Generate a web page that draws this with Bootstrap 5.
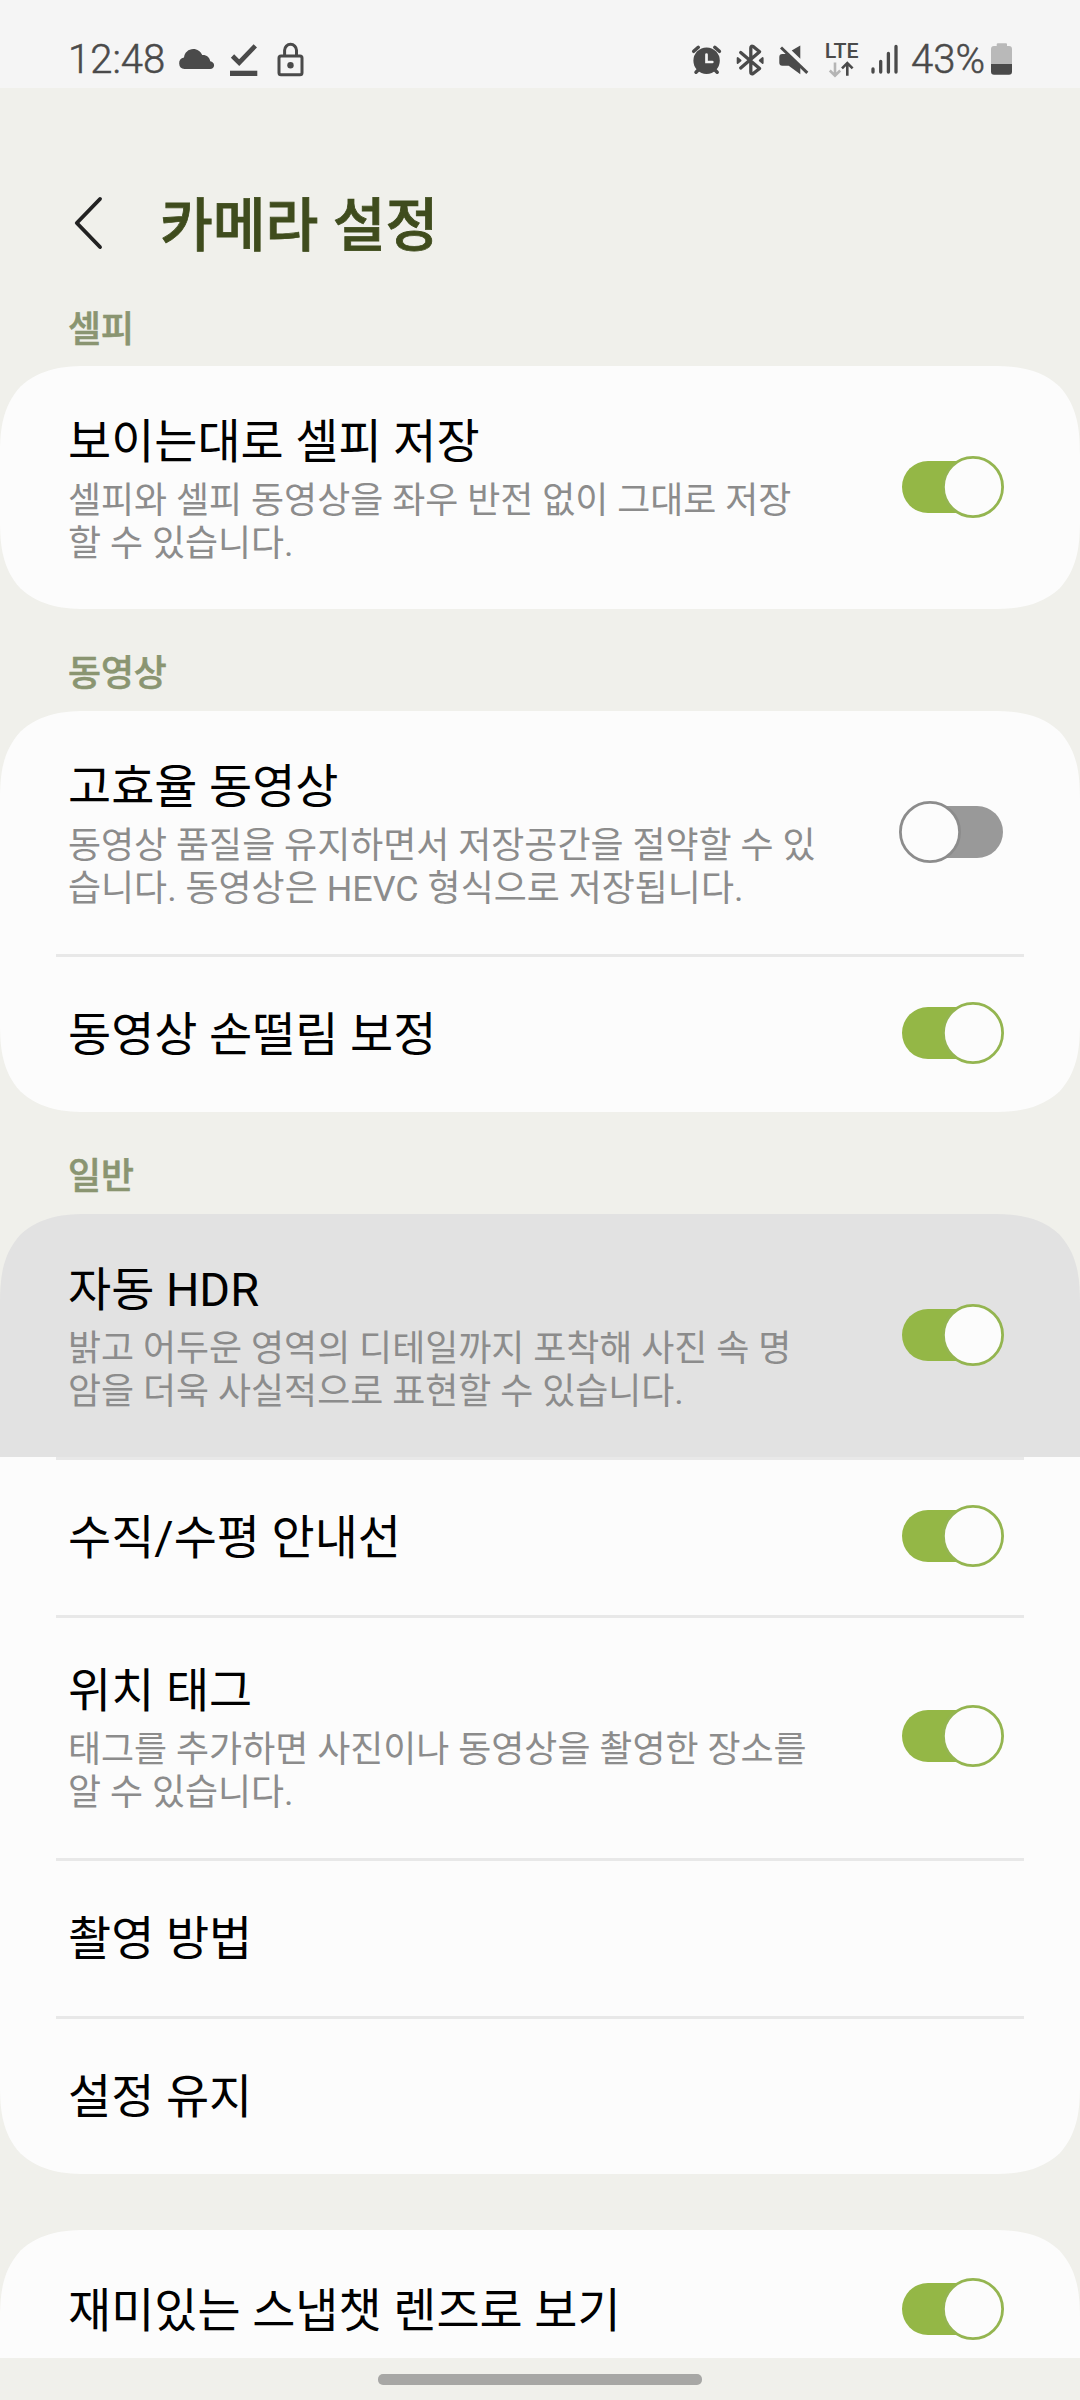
<!DOCTYPE html>
<html lang="ko">
<head>
<meta charset="utf-8">
<meta name="viewport" content="width=device-width, initial-scale=1">
<title>카메라 설정</title>
<link href="https://cdn.jsdelivr.net/npm/bootstrap@5.3.0/dist/css/bootstrap.min.css" rel="stylesheet">
<style>
  body { background: #f0f0eb; font-family: Roboto, "Noto Sans CJK KR", sans-serif; color: #000; }
  .screen { width: 1080px; height: 2400px; }
  .statusbar { height: 88px; background: #f5f5f5; color: #4a4a4a; font-size: 40px; line-height: 47px; font-weight: 300; -webkit-text-stroke: .5px #4a4a4a; padding: 0 67px 0 68px; flex: none; }
  .statusbar .clock { padding-top: 36px; width: 104px; }
  .statusbar .charge { padding-top: 36px; width: 74px; white-space: nowrap; }
  .statusbar svg { height: 88px; flex: none; }
  .appbar { height: 218px; padding: 51px 0 0 68px; flex: none; }
  .appbar h1 { font-size: 57.4px; line-height: 80px; font-weight: 500; -webkit-text-stroke: .8px #3f4c1d; color: #3f4c1d; margin: 9px 0 0 52px; }
  .section-label { font-size: 35.8px; line-height: 42px; font-weight: 500; -webkit-text-stroke: .6px #8a9571; color: #8a9571; padding-left: 68px; height: 102px; padding-top: 44px; flex: none; }
  .section-label.first { height: 60px; padding-top: 3px; }
  .panel { background: #fcfcfc; flex: none; }
  .item { height: 158px; padding: 0 76px 0 68px; }
  .item.tall { height: 243px; padding-bottom: 1px; }
  .item.tall .item-title { padding-top: 6px; }
  .item.pressed { background: #e2e2e2; }
  .item + .item::before { content: ""; position: absolute; top: 0; left: 56px; right: 56px; height: 3px; background: #e8e8e8; }
  .item-title { font-size: 46.9px; line-height: 56px; white-space: nowrap; padding-top: 3px; }
  .item-desc { font-size: 35.93px; line-height: 43px; color: #8c8c8c; white-space: nowrap; padding-top: 10px; }
  .toggle { width: 105px; height: 62px; flex: none; }
  .curve { position: absolute; width: 96px; height: 96px; fill: #f0f0eb; z-index: 2; }
  .curve.tl { left: 0; top: 0; }
  .curve.tr { right: 0; top: 0; transform: scaleX(-1); }
  .curve.bl { left: 0; bottom: 0; transform: scaleY(-1); }
  .curve.br { right: 0; bottom: 0; transform: scale(-1); }
  .gap-block { height: 56px; flex: none; }
  .last { height: 128px; }
  .navarea { height: 42px; padding-top: 16px; flex: none; }
  .home-pill { width: 324px; height: 11px; border-radius: 5px; background: #a7a7a5; }
</style>
</head>
<body>
<svg class="d-none">
  <symbol id="curve" viewBox="0 0 96 96"><path d="M0 0H90C64 0 41 2 20.500 20.500C2 41 0 64 0 90Z"/></symbol>
  <symbol id="on" viewBox="0 0 105 62"><rect x="3" y="5" width="100" height="52" rx="26" fill="#94b746"/><circle cx="74" cy="31" r="29.600" fill="#fcfcfc" stroke="#94b550" stroke-width="2.800"/></symbol>
  <symbol id="off" viewBox="0 0 105 62"><rect x="3" y="5" width="101" height="52" rx="26" fill="#999"/><circle cx="31" cy="31" r="29.600" fill="#fcfcfc" stroke="#8c8c8c" stroke-width="2.800"/></symbol>
</svg>
<div class="screen d-flex flex-column overflow-hidden">
  <header class="statusbar d-flex justify-content-between">
    <div class="d-flex">
      <span class="clock">12:48</span>
      <svg width="46" viewBox="172 0 46 88" fill="#4a4a4a"><path d="M184.500 69a5.800 5.800 0 0 1-.5-11.500C184.500 52.500 188.500 49 193.300 49c4 0 7.400 2.400 8.900 6 4.300-.3 7.600 2.500 8 6.200 2.400.4 3.900 2 3.900 4 0 2.200-1.700 3.800-4 3.800z"/></svg>
      <svg width="52" viewBox="218 0 52 88"><path d="M232.500 56l6.700 6.600L255.300 45.800" fill="none" stroke="#4a4a4a" stroke-width="4.700"/><path d="M230 70.700h27.300V76H230z" fill="#4a4a4a"/></svg>
      <svg width="36" viewBox="270 0 36 88" fill="none" stroke="#4a4a4a" stroke-width="3"><rect x="279" y="56" width="23" height="18.800" rx="2"/><path d="M284.600 56v-5.700a5.900 5.900 0 0 1 11.900 0V56"/><circle cx="290.500" cy="65.200" r="3.200" fill="#4a4a4a" stroke="none"/></svg>
    </div>
    <div class="d-flex">
      <svg width="40" viewBox="690 0 40 88" fill="none" stroke="#4a4a4a" stroke-width="3.500" stroke-linecap="round"><circle cx="706.600" cy="60.700" r="13.200" fill="#4a4a4a" stroke="none"/><path d="M693.700 51.300l4.600-4M719.400 51.300l-4.600-4M696 72.200l3-3M717.200 72.200l-3-3"/><path d="M706.500 54.500V62h5.800" stroke="#f5f5f5" stroke-width="2.700"/></svg>
      <svg width="45" viewBox="730 0 45 88" fill="none" stroke="#4a4a4a" stroke-width="3.300" stroke-linejoin="round" stroke-linecap="round"><path d="M740.700 52.500l18.900 16-6.400 5q-2.400 1.200-2.400-1.500V48q0-2.700 2.400-1.500l6.400 5.200L740.700 68"/><path d="M737.600 58v5l3-2.500zM762.700 58v5l-3-2.500z" stroke-width="1.800" fill="#4a4a4a"/></svg>
      <svg width="45" viewBox="775 0 45 88" fill="#4a4a4a"><path d="M800.300 45.500v13.200l-8.600-8.200zM782.300 54h5.200l12.800 12.300v8L788.700 65.700h-6.400q-3-.2-3-3v-5.600q0-2.900 3-3.100z"/><path d="M781 47.500l26.300 25.400" fill="none" stroke="#4a4a4a" stroke-width="3"/></svg>
      <svg width="45" viewBox="820 0 45 88" fill="none"><text x="824.700" y="58.300" font-size="20" font-weight="500" textLength="34" lengthAdjust="spacingAndGlyphs" fill="#4a4a4a">LTE</text><g stroke-width="2.600"><path d="M835 62.500V76M829.800 70.500l5.200 5.200 5.200-5.200" stroke="#b5b5b5"/><path d="M847.300 75.700V62.500M842 68.300l5.300-5.300 5.300 5.300" stroke="#4a4a4a"/></g></svg>
      <svg width="46" viewBox="865 0 46 88" stroke="#4a4a4a" stroke-width="3.300" stroke-linecap="round"><path d="M873 69v3M880.700 61.300V72M888.400 53.500V72M896 46.500V72"/></svg>
      <span class="charge">43%</span>
      <svg width="28" viewBox="985 0 28 88"><path d="M998 43.300h8q1 0 1 1V46h2q3 0 3 3v15.500h-21V49q0-3 3-3h2.700v-1.700q0-1 1.300-1z" fill="#b9b9b9"/><path d="M991 64h21v7.700q0 3-3 3h-15q-3 0-3-3z" fill="#4a4a4a"/></svg>
    </div>
  </header>

  <div class="appbar d-flex align-items-center align-self-start">
    <svg width="40" height="60" viewBox="68 193 40 60" fill="none" stroke="#222" stroke-width="3.900" stroke-linecap="round" stroke-linejoin="round"><path d="M100 199L76.800 223 100 247"/></svg>
    <h1>카메라 설정</h1>
  </div>

  <div class="section-label first">셀피</div>
  <section class="panel position-relative">
    <div class="item tall position-relative d-flex align-items-center justify-content-between">
      <div><div class="item-title">보이는대로 셀피 저장</div><div class="item-desc">셀피와 셀피 동영상을 좌우 반전 없이 그대로 저장<br>할 수 있습니다.</div></div>
      <svg class="toggle"><use href="#on"/></svg>
    </div>
    <svg class="curve tl"><use href="#curve"/></svg><svg class="curve tr"><use href="#curve"/></svg><svg class="curve bl"><use href="#curve"/></svg><svg class="curve br"><use href="#curve"/></svg>
  </section>

  <div class="section-label">동영상</div>
  <section class="panel position-relative">
    <div class="item tall position-relative d-flex align-items-center justify-content-between">
      <div><div class="item-title">고효율 동영상</div><div class="item-desc">동영상 품질을 유지하면서 저장공간을 절약할 수 있<br>습니다. 동영상은 HEVC 형식으로 저장됩니다.</div></div>
      <svg class="toggle"><use href="#off"/></svg>
    </div>
    <div class="item position-relative d-flex align-items-center justify-content-between">
      <div class="item-title">동영상 손떨림 보정</div>
      <svg class="toggle"><use href="#on"/></svg>
    </div>
    <svg class="curve tl"><use href="#curve"/></svg><svg class="curve tr"><use href="#curve"/></svg><svg class="curve bl"><use href="#curve"/></svg><svg class="curve br"><use href="#curve"/></svg>
  </section>

  <div class="section-label">일반</div>
  <section class="panel position-relative">
    <div class="item tall pressed position-relative d-flex align-items-center justify-content-between">
      <div><div class="item-title">자동 HDR</div><div class="item-desc">밝고 어두운 영역의 디테일까지 포착해 사진 속 명<br>암을 더욱 사실적으로 표현할 수 있습니다.</div></div>
      <svg class="toggle"><use href="#on"/></svg>
    </div>
    <div class="item position-relative d-flex align-items-center justify-content-between">
      <div class="item-title">수직/수평 안내선</div>
      <svg class="toggle"><use href="#on"/></svg>
    </div>
    <div class="item tall position-relative d-flex align-items-center justify-content-between">
      <div><div class="item-title">위치 태그</div><div class="item-desc">태그를 추가하면 사진이나 동영상을 촬영한 장소를<br>알 수 있습니다.</div></div>
      <svg class="toggle"><use href="#on"/></svg>
    </div>
    <div class="item position-relative d-flex align-items-center"><div class="item-title">촬영 방법</div></div>
    <div class="item position-relative d-flex align-items-center"><div class="item-title">설정 유지</div></div>
    <svg class="curve tl"><use href="#curve"/></svg><svg class="curve tr"><use href="#curve"/></svg><svg class="curve bl"><use href="#curve"/></svg><svg class="curve br"><use href="#curve"/></svg>
  </section>

  <div class="gap-block"></div>
  <section class="panel last position-relative overflow-hidden">
    <div class="item position-relative d-flex align-items-center justify-content-between">
      <div class="item-title">재미있는 스냅챗 렌즈로 보기</div>
      <svg class="toggle"><use href="#on"/></svg>
    </div>
    <svg class="curve tl"><use href="#curve"/></svg><svg class="curve tr"><use href="#curve"/></svg>
  </section>
  <footer class="navarea d-flex justify-content-center"><div class="home-pill"></div></footer>
</div>
<script src="https://cdn.jsdelivr.net/npm/bootstrap@5.3.0/dist/js/bootstrap.bundle.min.js"></script>
</body>
</html>
